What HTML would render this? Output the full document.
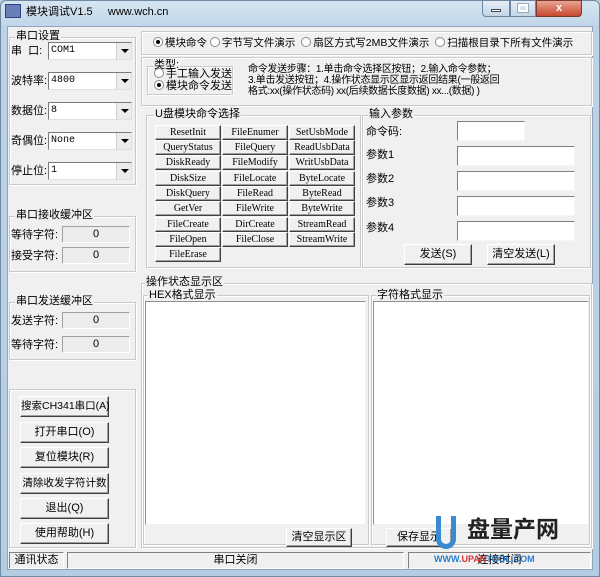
<!DOCTYPE html>
<html><head><meta charset="utf-8"><style>
*{box-sizing:border-box;margin:0;padding:0}
body{width:600px;height:577px;overflow:hidden;background:#b9d1e4;font-family:"Liberation Sans","Noto Sans CJK SC",sans-serif;font-size:11px;color:#000;position:relative}
.a{position:absolute}
.frame{left:0;top:0;width:600px;height:577px;background:linear-gradient(#d7e5f1,#bcd3e6 30px,#b5cde2);border:1px solid #6f8aa3;border-radius:6px 6px 0 0}
.client{left:7px;top:26px;width:586px;height:544px;background:#f0f0f0;border:1px solid #8ea5bc}
.grp{position:absolute;border:1px solid #c9c9c9;box-shadow:inset 1px 1px 0 #fff,1px 1px 0 #fff}
.gl{position:absolute;background:#f0f0f0;padding:0 1px;line-height:13px;font-size:11px;white-space:nowrap}
.combo{position:absolute;height:18px;background:#fff;border:1px solid #7a7a7a;border-right-color:#e0e0e0;border-bottom-color:#e0e0e0;font-family:"Liberation Mono",monospace;font-size:10px;line-height:16px;padding-left:2px}
.combo i{position:absolute;right:0;top:0;width:15px;height:16px;background:#ececec;border-left:1px solid #ccc}
.combo i:after{content:"";position:absolute;left:4px;top:6px;border:4px solid transparent;border-top:4px solid #000;border-bottom:0}
.fld{position:absolute;background:#ececec;border:1px solid #a0a0a0;border-right-color:#fff;border-bottom-color:#fff;text-align:center;font-size:11px;line-height:15px}
.inp{position:absolute;background:#fff;border:1px solid #808080;border-right-color:#f6f6f6;border-bottom-color:#f6f6f6;height:20px}
.btn{position:absolute;background:#f0f0f0;border:1px solid;border-color:#fff #404040 #404040 #fff;box-shadow:inset -1px -1px 0 #a0a0a0;text-align:center;font-size:11px;white-space:nowrap}
.cb{font-family:"Liberation Serif",serif;font-size:10px;line-height:13px;width:66px;height:15px}
.lbl{position:absolute;white-space:nowrap;font-size:11px;line-height:14px}
.rad{display:inline-block;width:10px;height:10px;border:1px solid #8a8a8a;border-radius:50%;background:#fff;vertical-align:-1px;margin-right:2px;position:relative}
.rad.on:after{content:"";position:absolute;left:2px;top:2px;width:4px;height:4px;border-radius:50%;background:#000}
.white{position:absolute;background:#fff;border:1px solid #909090;border-right-color:#f0f0f0;border-bottom-color:#f0f0f0}
.sb{position:absolute;top:552px;height:17px;border:1px solid;border-color:#808080 #fff #fff #808080;text-align:center;font-size:11px;line-height:15px}
</style></head><body>
<div class="a frame"></div>
<div class="a" style="left:5px;top:4px;width:16px;height:14px;background:#6a7fb8;border:1px solid #304080"></div>
<div class="lbl" style="left:26px;top:5px;font-size:11px">模块调试V1.5 &nbsp; &nbsp; www.wch.cn</div>
<div class="a" style="left:482px;top:0;width:28px;height:17px;border:1px solid #6d87a2;border-radius:0 0 0 4px;background:linear-gradient(#e5eef7,#c3d5e6)"></div>
<div class="a" style="left:491px;top:9px;width:10px;height:3px;background:#fff;border:1px solid #445"></div>
<div class="a" style="left:510px;top:0;width:26px;height:17px;border:1px solid #6d87a2;background:linear-gradient(#e5eef7,#c3d5e6)"></div>
<div class="a" style="left:518px;top:4px;width:10px;height:8px;border:2px solid #fff;outline:1px solid #9ab"></div>
<div class="a" style="left:536px;top:0;width:46px;height:17px;border:1px solid #7a3a2e;border-radius:0 0 4px 0;background:linear-gradient(#e8a493,#c7482f);color:#fff;text-align:center;font-weight:bold;line-height:15px">x</div>
<div class="a client"></div>

<div class="grp" style="left:9px;top:37px;width:127px;height:148px"></div><div class="gl" style="left:15px;top:30px">串口设置</div>
<div class="lbl" style="left:11px;top:44px">串 &nbsp;口:</div><div class="combo" style="left:48px;top:42px;width:84px">COM1<i></i></div>
<div class="lbl" style="left:11px;top:74px">波特率:</div><div class="combo" style="left:48px;top:72px;width:84px">4800<i></i></div>
<div class="lbl" style="left:11px;top:104px">数据位:</div><div class="combo" style="left:48px;top:102px;width:84px">8<i></i></div>
<div class="lbl" style="left:11px;top:134px">奇偶位:</div><div class="combo" style="left:48px;top:132px;width:84px">None<i></i></div>
<div class="lbl" style="left:11px;top:164px">停止位:</div><div class="combo" style="left:48px;top:162px;width:84px">1<i></i></div>

<div class="grp" style="left:9px;top:216px;width:127px;height:56px"></div><div class="gl" style="left:15px;top:209px">串口接收缓冲区</div>
<div class="lbl" style="left:11px;top:228px">等待字符:</div><div class="fld" style="left:62px;top:226px;width:68px;height:17px">0</div>
<div class="lbl" style="left:11px;top:249px">接受字符:</div><div class="fld" style="left:62px;top:247px;width:68px;height:17px">0</div>

<div class="grp" style="left:9px;top:302px;width:127px;height:58px"></div><div class="gl" style="left:15px;top:295px">串口发送缓冲区</div>
<div class="lbl" style="left:11px;top:314px">发送字符:</div><div class="fld" style="left:62px;top:312px;width:68px;height:17px">0</div>
<div class="lbl" style="left:11px;top:338px">等待字符:</div><div class="fld" style="left:62px;top:336px;width:68px;height:17px">0</div>

<div class="grp" style="left:9px;top:389px;width:127px;height:159px"></div>
<div class="btn" style="left:20px;top:396px;width:89px;height:21px;line-height:19px;font-size:10.5px">搜索CH341串口(A)</div>
<div class="btn" style="left:20px;top:422px;width:89px;height:21px;line-height:19px">打开串口(O)</div>
<div class="btn" style="left:20px;top:447px;width:89px;height:21px;line-height:19px">复位模块(R)</div>
<div class="btn" style="left:20px;top:473px;width:89px;height:21px;line-height:19px;font-size:10.5px">清除收发字符计数</div>
<div class="btn" style="left:20px;top:498px;width:89px;height:21px;line-height:19px">退出(Q)</div>
<div class="btn" style="left:20px;top:523px;width:89px;height:21px;line-height:19px">使用帮助(H)</div>

<div class="grp" style="left:141px;top:31px;width:451px;height:24px"></div>
<div class="lbl" style="left:153px;top:36px;font-size:10.5px"><span class="rad on"></span>模块命令 <span class="rad"></span>字节写文件演示 &nbsp;<span class="rad"></span>扇区方式写2MB文件演示 &nbsp;<span class="rad"></span>扫描根目录下所有文件演示</div>

<div class="grp" style="left:141px;top:57px;width:451px;height:49px"></div>
<div class="grp" style="left:147px;top:66px;width:86px;height:29px"></div><div class="gl" style="left:153px;top:59px">类型:</div>
<div class="lbl" style="left:154px;top:68px;line-height:12px"><span class="rad"></span>手工输入发送</div>
<div class="lbl" style="left:154px;top:80px;line-height:12px"><span class="rad on"></span>模块命令发送</div>
<div class="lbl" style="left:248px;top:64px;font-size:10px;line-height:11px;letter-spacing:-0.3px">命令发送步骤：1.单击命令选择区按钮；2.输入命令参数；<br>3.单击发送按钮；4.操作状态显示区显示返回结果(一般返回<br>格式:xx(操作状态码) xx(后续数据长度数据) xx...(数据) )</div>

<div class="grp" style="left:146px;top:115px;width:215px;height:153px"></div><div class="gl" style="left:154px;top:108px">U盘模块命令选择</div>
<div class="grp" style="left:362px;top:115px;width:229px;height:153px"></div><div class="gl" style="left:368px;top:108px">输入参数</div>

<div class="btn cb" style="left:155px;top:125px">ResetInit</div><div class="btn cb" style="left:222px;top:125px">FileEnumer</div><div class="btn cb" style="left:289px;top:125px">SetUsbMode</div>
<div class="btn cb" style="left:155px;top:140px">QueryStatus</div><div class="btn cb" style="left:222px;top:140px">FileQuery</div><div class="btn cb" style="left:289px;top:140px">ReadUsbData</div>
<div class="btn cb" style="left:155px;top:155px">DiskReady</div><div class="btn cb" style="left:222px;top:155px">FileModify</div><div class="btn cb" style="left:289px;top:155px">WritUsbData</div>
<div class="btn cb" style="left:155px;top:171px">DiskSize</div><div class="btn cb" style="left:222px;top:171px">FileLocate</div><div class="btn cb" style="left:289px;top:171px">ByteLocate</div>
<div class="btn cb" style="left:155px;top:186px">DiskQuery</div><div class="btn cb" style="left:222px;top:186px">FileRead</div><div class="btn cb" style="left:289px;top:186px">ByteRead</div>
<div class="btn cb" style="left:155px;top:201px">GetVer</div><div class="btn cb" style="left:222px;top:201px">FileWrite</div><div class="btn cb" style="left:289px;top:201px">ByteWrite</div>
<div class="btn cb" style="left:155px;top:217px">FileCreate</div><div class="btn cb" style="left:222px;top:217px">DirCreate</div><div class="btn cb" style="left:289px;top:217px">StreamRead</div>
<div class="btn cb" style="left:155px;top:232px">FileOpen</div><div class="btn cb" style="left:222px;top:232px">FileClose</div><div class="btn cb" style="left:289px;top:232px">StreamWrite</div>
<div class="btn cb" style="left:155px;top:247px">FileErase</div>

<div class="lbl" style="left:366px;top:125px">命令码:</div><div class="inp" style="left:457px;top:121px;width:68px"></div>
<div class="lbl" style="left:366px;top:148px">参数1</div><div class="inp" style="left:457px;top:146px;width:118px"></div>
<div class="lbl" style="left:366px;top:172px">参数2</div><div class="inp" style="left:457px;top:171px;width:118px"></div>
<div class="lbl" style="left:366px;top:196px">参数3</div><div class="inp" style="left:457px;top:196px;width:118px"></div>
<div class="lbl" style="left:366px;top:221px">参数4</div><div class="inp" style="left:457px;top:221px;width:118px"></div>
<div class="btn" style="left:404px;top:244px;width:68px;height:21px;line-height:19px">发送(S)</div>
<div class="btn" style="left:487px;top:244px;width:68px;height:21px;line-height:19px">清空发送(L)</div>

<div class="grp" style="left:141px;top:283px;width:451px;height:265px"></div><div class="gl" style="left:145px;top:276px">操作状态显示区</div>
<div class="grp" style="left:143px;top:295px;width:226px;height:250px"></div><div class="gl" style="left:148px;top:289px">HEX格式显示</div>
<div class="grp" style="left:371px;top:295px;width:219px;height:250px"></div><div class="gl" style="left:376px;top:289px">字符格式显示</div>
<div class="white" style="left:145px;top:301px;width:221px;height:224px"></div>
<div class="white" style="left:373px;top:301px;width:216px;height:224px"></div>
<div class="btn" style="left:286px;top:528px;width:66px;height:19px;line-height:17px">清空显示区</div>
<div class="btn" style="left:386px;top:528px;width:66px;height:19px;line-height:17px">保存显示</div>

<div class="sb" style="left:9px;width:55px">通讯状态</div>
<div class="sb" style="left:67px;width:337px">串口关闭</div>
<div class="sb" style="left:408px;width:183px">连接时间</div>

<div class="a" style="left:436px;top:516px;width:20px;height:33px;border:5px solid #3a8ad0;border-top:0;border-radius:0 0 10px 10px"></div>
<div class="lbl" style="left:467px;top:516px;font-size:23px;line-height:26px;font-weight:bold;color:#222">盘量产网</div>
<div class="lbl" style="left:434px;top:552px;font-size:9px;font-weight:bold;color:#2a7fd0">WWW.<span style="color:#d33">UPAN</span>TOOL.COM</div>
</body></html>
